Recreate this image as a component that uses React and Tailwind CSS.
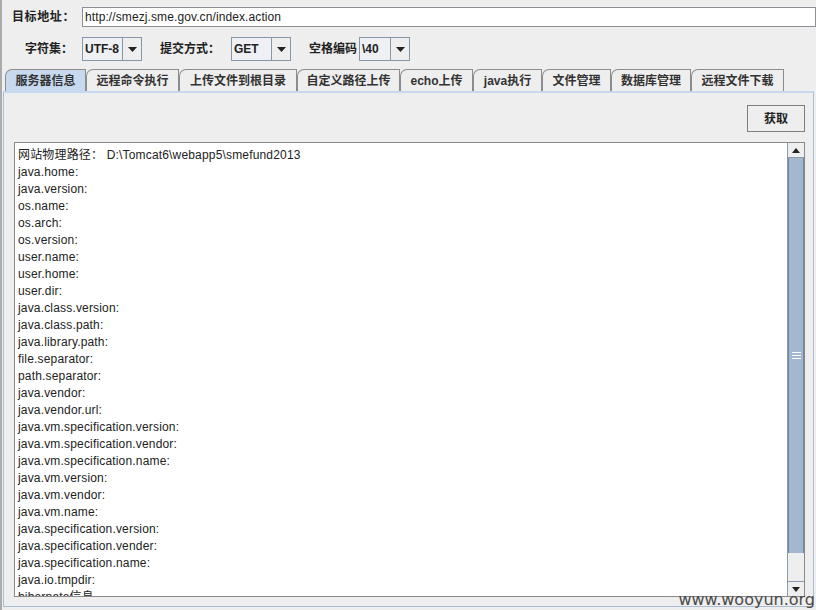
import React from 'react';

const font = { fontFamily: '"Liberation Sans", Arial, "Noto Sans CJK SC", sans-serif' };

const tabs = [
  { label: '服务器信息', w: 'w-[81px]', active: true },
  { label: '远程命令执行', w: 'w-[93px]' },
  { label: '上传文件到根目录', w: 'w-[118px]' },
  { label: '自定义路径上传', w: 'w-[103px]' },
  { label: 'echo上传', w: 'w-[73px]' },
  { label: 'java执行', w: 'w-[69px]' },
  { label: '文件管理', w: 'w-[69px]' },
  { label: '数据库管理', w: 'w-[80px]' },
  { label: '远程文件下载', w: 'w-[93px]' },
];

const lines = [
  '网站物理路径： D:\\Tomcat6\\webapp5\\smefund2013',
  'java.home:',
  'java.version:',
  'os.name:',
  'os.arch:',
  'os.version:',
  'user.name:',
  'user.home:',
  'user.dir:',
  'java.class.version:',
  'java.class.path:',
  'java.library.path:',
  'file.separator:',
  'path.separator:',
  'java.vendor:',
  'java.vendor.url:',
  'java.vm.specification.version:',
  'java.vm.specification.vendor:',
  'java.vm.specification.name:',
  'java.vm.version:',
  'java.vm.vendor:',
  'java.vm.name:',
  'java.specification.version:',
  'java.specification.vender:',
  'java.specification.name:',
  'java.io.tmpdir:',
  'hibernate信息',
];

const Arrow = ({ up }) => (
  <svg width="8" height="5" viewBox="0 0 8 5">
    <path d={up ? 'M0 5 L4 0 L8 5 Z' : 'M0 0 L8 0 L4 5 Z'} fill="#222" />
  </svg>
);

const Combo = ({ value, w }) => (
  <div className="flex h-[24px]">
    <div className={`${w} h-full border border-[#8797aa] bg-[#eef0f3] flex items-center pl-[2px] text-[12px] font-bold text-[#222]`}>
      {value}
    </div>
    <div className="w-[19px] h-full border border-l-0 border-[#8797aa] bg-[#eeeeee] flex items-center justify-center">
      <svg width="9" height="5" viewBox="0 0 9 5">
        <path d="M0 0 L9 0 L4.5 5 Z" fill="#222" />
      </svg>
    </div>
  </div>
);

export default function App() {
  return (
    <div className="w-[816px] h-[610px] bg-[#eeeeee] border-l-[2px] border-[#ababab] relative overflow-hidden text-[#222]" style={font}>
      {/* 目标地址 */}
      <div className="flex items-center mt-[7px] h-[20px]">
        <div className="w-[80px] pl-[10px] text-[12px] font-bold tracking-[0.6px]">目标地址：</div>
        <div className="flex-1 h-full bg-white border border-[#8a8f96] flex items-center pl-[2px] text-[12px] tracking-[0.1px]">
          http://smezj.sme.gov.cn/index.action
        </div>
      </div>

      {/* 参数 */}
      <div className="flex items-center mt-[10px] text-[12px] font-bold">
        <div className="w-[80px] pl-[23px]">字符集：</div>
        <Combo value="UTF-8" w="w-[41px]" />
        <div className="ml-[18px] w-[71px]">提交方式：</div>
        <Combo value="GET" w="w-[41px]" />
        <div className="ml-[18px] w-[50px]">空格编码</div>
        <Combo value="\40" w="w-[32px]" />
      </div>

      {/* tabs */}
      <div className="flex mt-[8px] pl-[3px] h-[22px] items-end">
        {tabs.map((t) => (
          <div
            key={t.label}
            className={`${t.w} h-[22px] border border-b-0 border-[#8c8c8c] rounded-tl-[7px] flex items-center justify-center text-[12px] font-bold text-[#333] ${t.active ? 'bg-[#c6d9ee]' : 'bg-[#eeeeee]'}`}
          >
            {t.label}
          </div>
        ))}
      </div>

      {/* panel */}
      <div className="ml-[1px] w-[811px] h-[516px] border border-[#a9bed6] border-t-[2px] border-t-[#c6d9ee] flex flex-col pl-[10px] pr-[8px]">
        <div className="flex justify-end mt-[12px]">
          <div className="w-[58px] h-[27px] border border-[#7e7e7e] bg-[#eeeeee] flex items-center justify-center text-[12px] font-bold">
            获取
          </div>
        </div>
        <div className="mt-[10px] h-[455px] border border-[#8a8a8a] bg-white flex overflow-hidden">
          <div className="flex-1 pl-[3px] pt-[4px] overflow-hidden">
            {lines.map((l, i) => (
              <div key={i} className="h-[17px] leading-[17px] text-[12px] tracking-[0.17px] text-[#222] whitespace-pre">
                {l}
              </div>
            ))}
          </div>
          <div className="w-[17px] border-l border-[#8a9bb0] bg-[#eeeeee] flex flex-col">
            <div className="h-[15px] flex items-center justify-center border-b border-[#8a9bb0]">
              <Arrow up />
            </div>
            <div className="h-[395px] bg-[#a3b8cf] border-x border-[#6e87a5] flex items-center justify-center">
              <div className="flex flex-col gap-[2px]">
                <div className="w-[9px] h-[1px] bg-white" />
                <div className="w-[9px] h-[1px] bg-white" />
                <div className="w-[9px] h-[1px] bg-white" />
              </div>
            </div>
            <div className="flex-1" />
            <div className="h-[15px] flex items-center justify-center border-t border-[#8a9bb0]">
              <Arrow />
            </div>
          </div>
        </div>
      </div>

      {/* watermark */}
      <div
        className="absolute right-[1px] bottom-[-2px] text-[16px] text-[#4a4a4a]"
        style={{ fontFamily: '"DejaVu Sans", Verdana, sans-serif' }}
      >
        www.wooyun.org
      </div>
    </div>
  );
}
